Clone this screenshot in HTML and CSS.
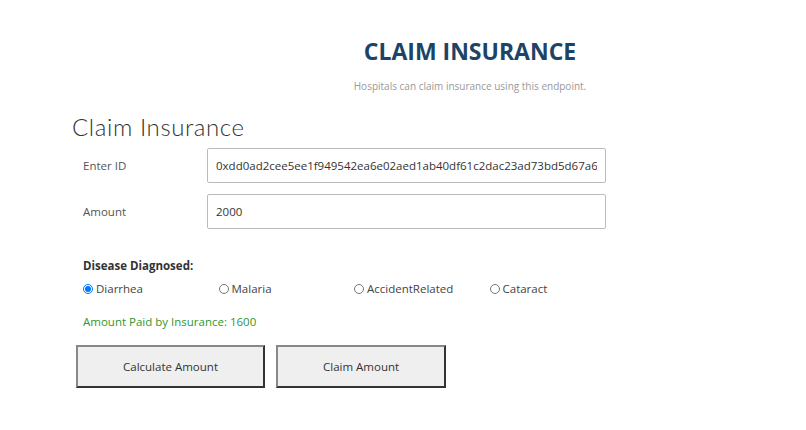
FILE: index.html
```html
<!DOCTYPE html>
<html lang="en">
<head>
  <meta charset="UTF-8">
  <meta name="viewport" content="width=device-width,initial-scale=1">
  <title>Claim Insurance</title>
  <link rel="stylesheet" href="styles.css">
</head>
<body>
  <!-- page header -->
  <header class="hero">
    <h1>CLAIM INSURANCE</h1>
    <p class="sub">Hospitals can claim insurance using this endpoint.</p>
  </header>

  <!-- claim form -->
  <main class="claim">
    <h2>Claim Insurance</h2>
    <div class="row">
      <label class="label" for="pid">Enter ID</label>
      <input class="field" id="pid" type="text" value="0xdd0ad2cee5ee1f949542ea6e02aed1ab40df61c2dac23ad73bd5d67a6">
    </div>
    <div class="row">
      <label class="label" for="amount">Amount</label>
      <input class="field" id="amount" type="text" value="2000">
    </div>

    <div class="disease">
      <p class="disease-title">Disease Diagnosed:</p>
      <div class="options">
        <label class="opt"><input type="radio" name="disease" checked>Diarrhea</label>
        <label class="opt"><input type="radio" name="disease">Malaria</label>
        <label class="opt"><input type="radio" name="disease">AccidentRelated</label>
        <label class="opt"><input type="radio" name="disease">Cataract</label>
      </div>
    </div>

    <p class="paid">Amount Paid by Insurance: 1600</p>

    <div class="actions">
      <button class="btn">Calculate Amount</button>
      <button class="btn">Claim Amount</button>
    </div>
  </main>
</body>
</html>
```

FILE: styles.css
```css
/* ---- base ---- */
* { box-sizing: border-box; }
html, body { margin: 0; padding: 0; background: #fff; }
body { font-family: "Open Sans", "Liberation Sans", sans-serif; color: #333; }

/* ---- header ---- */
.hero { padding: 36px 0 0 134px; text-align: center; }
.hero h1 { margin: 0; font-size: 23px; line-height: 30px; font-weight: 700; color: #1d4466; }
.sub { margin: 13px 0 0; font-size: 10px; line-height: 14px; color: #999; }

/* ---- form ---- */
.claim { padding-left: 72px; }
.claim h2 { margin: 20px 0 0; font-family: Lato, "Open Sans", sans-serif; font-weight: 300; font-size: 24px; line-height: 28px; letter-spacing: 0.6px; color: #333; }

.row { display: flex; align-items: center; margin-top: 11px; }
.row:first-of-type { margin-top: 7px; }
.label { width: 135px; padding-left: 11px; font-size: 11.5px; color: #555; }
.field { width: 399px; height: 35px; padding: 0 8px; border: 1px solid #bbb; border-radius: 2px; font-family: inherit; font-size: 11.5px; color: #333; outline: none; }

.disease { padding-left: 11px; margin-top: 29px; }
.disease-title { margin: 0; font-size: 11.5px; line-height: 16px; font-weight: 700; color: #333; }
.options { display: flex; margin-top: 7px; }
.opt { width: 135.5px; display: flex; align-items: center; font-size: 11.5px; line-height: 16px; color: #444; }
.opt input { width: 10px; height: 10px; margin: 0 3px 0 0; }

.paid { margin: 17px 0 0 11px; font-size: 11.5px; line-height: 16px; color: #2f962f; }

/* ---- buttons ---- */
.actions { display: flex; gap: 11px; margin: 15px 0 0 4px; }
.btn { height: 43px; padding: 0 45px; background: #efefef; border: 2px solid; border-color: #888 #333 #333 #888; font-family: inherit; font-size: 11.5px; color: #333; }
```
